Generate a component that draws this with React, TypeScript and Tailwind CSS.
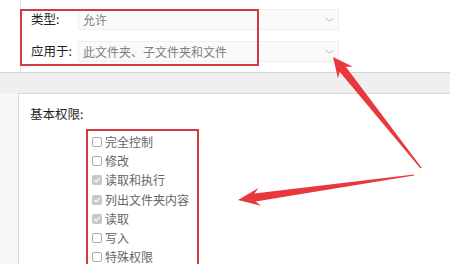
import React from "react";

const FONT = { fontFamily: '"Microsoft YaHei", "Noto Sans CJK SC", "Noto Sans", sans-serif' };

type Pt = [number, number];

// tapered arrow: wide head at tip, shaft thinning toward the tail
const arrowPoints = (tip: Pt, tail: Pt, headLen: number, headW: number, neckW: number, tailW: number) => {
  const dx = tail[0] - tip[0];
  const dy = tail[1] - tip[1];
  const len = Math.hypot(dx, dy);
  const ux = dx / len;
  const uy = dy / len;
  const nx = -uy;
  const ny = ux;
  const at = (d: number, w: number): string =>
    `${(tip[0] + ux * d + nx * w).toFixed(1)},${(tip[1] + uy * d + ny * w).toFixed(1)}`;
  return [
    at(0, 0),
    at(headLen, headW / 2),
    at(headLen * 0.78, neckW / 2),
    at(len, tailW / 2),
    at(len, -tailW / 2),
    at(headLen * 0.78, -neckW / 2),
    at(headLen, -headW / 2),
  ].join(" ");
};

const Chevron = () => (
  <svg width="9" height="6" viewBox="0 0 9 6" className="shrink-0">
    <path d="M1 1 L4.5 4.5 L8 1" fill="none" stroke="#b5b5b5" strokeWidth="1" />
  </svg>
);

const SelectRow = ({ label, value }: { label: string; value: string }) => (
  <div className="flex items-center h-[21px]">
    <span className="w-[47px] text-[12.5px] text-[#1e1e1e]">{label}</span>
    <div className="flex items-center justify-between w-[261px] h-[21px] pl-[4px] pr-[4px] bg-[#fafafa] border border-[#efefef] text-[12px] text-[#808080]">
      <span>{value}</span>
      <Chevron />
    </div>
  </div>
);

const perms = [
  { name: "完全控制", checked: false },
  { name: "修改", checked: false },
  { name: "读取和执行", checked: true },
  { name: "列出文件夹内容", checked: true },
  { name: "读取", checked: true },
  { name: "写入", checked: false },
  { name: "特殊权限", checked: false },
];

const Box = ({ checked }: { checked: boolean }) =>
  checked ? (
    <span className="flex items-center justify-center w-[10px] h-[10px] rounded-[2px] bg-[#c8c8c8]">
      <svg width="8" height="8" viewBox="0 0 8 8">
        <path d="M1.5 4 L3.3 5.8 L6.5 2.2" fill="none" stroke="#fff" strokeWidth="1.2" />
      </svg>
    </span>
  ) : (
    <span className="w-[10px] h-[10px] rounded-[2px] border border-[#ababab] bg-white" />
  );

export default function App() {
  return (
    <div className="relative w-[450px] h-[264px] overflow-hidden bg-white" style={FONT}>
      <div className="ml-[20px] pl-[10px] pt-[9px] h-[72px] border-l border-[#e6e6e6] flex flex-col gap-[11px]">
        <SelectRow label="类型:" value="允许" />
        <SelectRow label="应用于:" value="此文件夹、子文件夹和文件" />
      </div>

      <div className="h-[21px] bg-[#efefef] border-t border-[#d4d4d4]" />

      <div className="flex">
        <div className="w-[18px] bg-[#f6f6f6]" />
        <div className="flex-1 border-l border-t border-[#d8d8d8] pl-[11px] pt-[12px] h-[171px]">
          <div className="text-[12.5px] leading-[16px] text-[#1e1e1e]">基本权限:</div>
          <div className="mt-[10px] ml-[62px] flex flex-col">
            {perms.map(p => (
              <div key={p.name} className="flex items-center h-[19.3px] gap-[3px]">
                <Box checked={p.checked} />
                <span className="text-[12px] text-[#666]">{p.name}</span>
              </div>
            ))}
          </div>
        </div>
      </div>

      {/* annotations */}
      <div className="absolute left-[20px] top-[9px] w-[239px] h-[57px] border-2 border-[#cf3b3f] pointer-events-none" />
      <div className="absolute left-[86px] top-[129px] w-[113px] h-[140px] border-2 border-[#cf3b3f] pointer-events-none" />

      <svg className="absolute left-0 top-0 pointer-events-none" width="450" height="264">
        <polygon points={arrowPoints([333, 57], [421, 168], 20, 19, 8, 1.2)} fill="#e8383d" />
        <polygon points={arrowPoints([238, 200], [414, 175], 22, 18, 8, 1.2)} fill="#e8383d" />
      </svg>
    </div>
  );
}
